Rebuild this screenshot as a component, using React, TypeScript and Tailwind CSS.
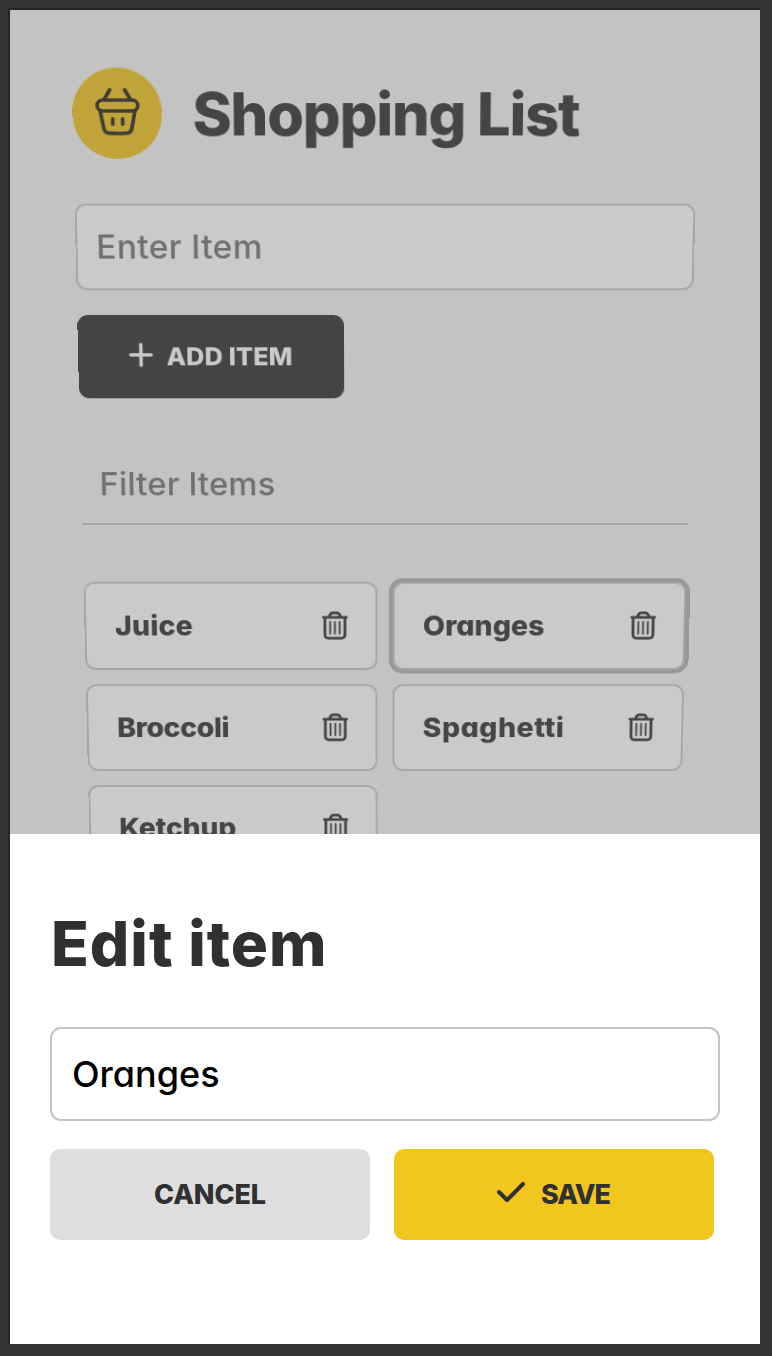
import React from "react";

const items = ["Juice", "Oranges", "Broccoli", "Spaghetti", "Ketchup"];

const tracking: Record<string, string> = {
  Juice: "tracking-[0.1px]",
  Oranges: "tracking-[0px]",
  Broccoli: "tracking-[-0.4px]",
  Spaghetti: "tracking-[0.6px]",
  Ketchup: "tracking-[-0.1px]",
};

function BasketIcon() {
  return (
    <svg className="mb-[3px]" width="46" height="50" viewBox="0 0 46 50" fill="none" stroke="#3f3d35" strokeWidth="3.7" strokeLinecap="round" strokeLinejoin="round">
      <rect x="3" y="13" width="41" height="11" rx="5.5" />
      <path d="M16 2.5 L10.5 12 M31 2.5 L36.5 12" />
      <path d="M6 24 L9.500 42.5 Q10.3 46.5 14.5 46.6 Q23.5 47.4 32.5 46.6 Q36.700 46.5 37.500 42.500 L41 24" />
      <path d="M18.500 32 V37.500 M28.500 32 V37.500" />
    </svg>
  );
}

function TrashIcon() {
  return (
    <svg width="27" height="32" viewBox="0 0 27 32" fill="none" stroke="#454547" strokeLinecap="round" strokeLinejoin="round">
      <path strokeWidth="2.900" d="M1.500 7 H25.500 M3 7 V26 Q3 30 7 30 H20 Q24 30 24 26 V7 M7.500 6.500 Q8.500 2 11.500 2 H15.500 Q18.500 2 19.500 6.500" />
      <path strokeWidth="1.900" d="M8.500 12 V25 M13.500 12 V25 M18.500 12 V25" />
    </svg>
  );
}

function ItemCard({ name, selected }: { name: string; selected: boolean }) {
  return (
    <li
      className={
        "flex h-[97.5px] items-center justify-between rounded-[11px] border-2 bg-[#cacaca] pl-[30px] pr-[29px] " +
        (selected ? "border-[#a2a2a2] outline-4 outline-[#989898]" : "border-[#a7a7a7]")
      }
    >
      <span className={"text-[30px] font-extrabold leading-none " + tracking[name]}>{name}</span>
      <TrashIcon />
    </li>
  );
}

export default function App() {
  return (
    <div className="h-[1356px] w-[772px] bg-[#333333] p-2 font-[Inter,sans-serif] [font-feature-settings:'cv11']">
      <div className="flex h-[1336px] w-[752px] flex-col border-l-2 border-t-2 border-[#252527]">
        <main className="h-[824px] overflow-hidden bg-[#c3c3c3] text-[#454547]">
          <div className="mx-auto w-[630px] origin-top pt-[58px] [transform:perspective(1000px)_rotateX(-4.27deg)]">
            <header className="flex h-[93px] items-center gap-[31px]">
              <div className="flex h-[93px] w-[90px] items-center justify-center rounded-full bg-[#c0a439]">
                <BasketIcon />
              </div>
              <h1 className="text-[60px] font-extrabold leading-none tracking-[-1.25px]">Shopping List</h1>
            </header>
            <div className="mt-[45.500px] flex h-[90px] items-center rounded-[11px] border-2 border-[#a7a7a7] bg-[#cacaca] px-[19px] pt-px text-[34px] font-medium tracking-[0.4px] text-[#707070]">
              <span className="leading-none">Enter Item</span>
            </div>
            <button className="mt-[26.500px] flex h-[88px] w-[273px] items-center justify-center gap-[14px] rounded-[11px] bg-[#454547] pr-[1px] text-[#cacaca]">
              <svg className="mb-[5px]" width="25" height="26" viewBox="0 0 25 26" stroke="currentColor" strokeWidth="3.500" strokeLinecap="round">
                <path d="M12.500 2 V24 M2 13 H23" />
              </svg>
              <span className="text-[26px] font-extrabold leading-none tracking-[0.1px]">ADD ITEM</span>
            </button>
            <div className="mt-[50.500px] flex h-[85px] items-center border-b-2 border-[#a4a4a4] px-[19px] text-[34px] font-medium tracking-[0.15px] text-[#707070]">
              <span className="leading-none">Filter Items</span>
            </div>
            <ul className="mt-[62px] grid grid-cols-2 gap-[15.500px]">
              {items.map((name) => (
                <ItemCard key={name} name={name} selected={name === "Oranges"} />
              ))}
            </ul>
          </div>
        </main>
        <section className="flex h-[510px] flex-col bg-white px-10 pt-[76px]">
          <h2 className="pl-px text-[62px] font-extrabold leading-[68px] tracking-[1px] text-[#303032]">Edit item</h2>
          <div className="mt-[49px] flex h-[94px] items-center rounded-[11px] border-2 border-[#c4c4c4] px-5 text-[36px] font-medium text-black">
            <span>Oranges</span>
          </div>
          <div className="mt-7 flex gap-6 text-[27px] font-extrabold text-[#303032]">
            <button className="h-[91px] w-[320px] rounded-[10px] bg-[#dedede] pt-[2px] tracking-[-0.1px]">CANCEL</button>
            <button className="flex h-[91px] w-[320px] items-center justify-center gap-4 rounded-[10px] bg-[#f1c61f] pr-px">
              <svg className="mb-[6px]" width="28" height="20" viewBox="0 0 28 20" fill="none" stroke="currentColor" strokeWidth="4" strokeLinecap="round" strokeLinejoin="round">
                <path d="M2 10 L10 18 L26 2" />
              </svg>
              <span className="pt-[2px] tracking-[-1px]">SAVE</span>
            </button>
          </div>
        </section>
      </div>
    </div>
  );
}
